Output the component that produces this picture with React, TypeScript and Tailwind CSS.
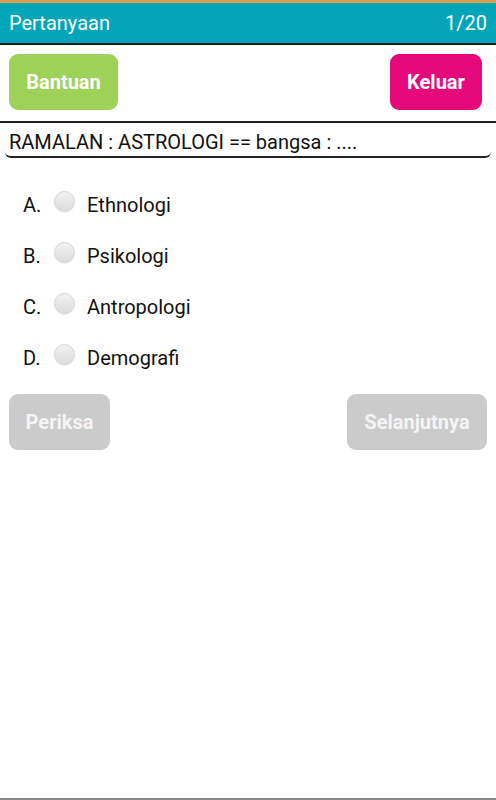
import React from 'react';

const options = [
  { key: 'A.', label: 'Ethnologi' },
  { key: 'B.', label: 'Psikologi' },
  { key: 'C.', label: 'Antropologi' },
  { key: 'D.', label: 'Demografi' },
];

const Radio: React.FC = () => (
  <span className="block h-[21px] w-[21px] rounded-full border border-[#d4d4d4] bg-gradient-to-b from-[#f2f2f2] to-[#dcdcdc] shadow-[0_1px_1px_rgba(0,0,0,0.08)]" />
);

const App: React.FC = () => {
  return (
    <div className="relative flex h-[800px] w-[496px] flex-col bg-white font-['Roboto',sans-serif] text-[#111]">
      <div className="h-[3px] bg-[#d9a24a]" />
      <header className="flex h-[42px] items-center justify-between border-b-2 border-[#1a1a1a] bg-[#02a6b8] px-[9px] text-[20px] text-white">
        <span>Pertanyaan</span>
        <span>1/20</span>
      </header>

      <div className="flex justify-between pl-[9px] pr-[14px] pt-[9px]">
        <button className="h-[56px] w-[109px] rounded-[9px] bg-[#9dd158] text-[20px] font-bold text-white">
          Bantuan
        </button>
        <button className="h-[56px] w-[92px] rounded-[9px] bg-[#e5097c] text-[20px] font-bold text-white">
          Keluar
        </button>
      </div>

      <div className="mt-[11px] border-t-2 border-[#222]">
        <div className="mx-[5px] rounded-b-[6px] border-b-2 border-[#222] px-[4px] pb-[2px] pt-[7px] text-[20px] leading-[24px]">
          RAMALAN : ASTROLOGI == bangsa : ....
        </div>
      </div>

      <div className="mt-[35px] flex flex-col gap-[27px] pl-[23px]">
        {options.map((o) => (
          <div key={o.key} className="flex h-[24px] items-center text-[20px]">
            <span className="w-[31px]">{o.key}</span>
            <span className="-mt-[8px]">
              <Radio />
            </span>
            <span className="ml-[12px]">{o.label}</span>
          </div>
        ))}
      </div>

      <div className="mt-[24px] flex justify-between pl-[9px] pr-[9px]">
        <button className="h-[56px] w-[101px] rounded-[9px] bg-[#cbcbcb] text-[20px] font-bold text-[#f4f4f4]">
          Periksa
        </button>
        <button className="h-[56px] w-[140px] rounded-[9px] bg-[#cbcbcb] text-[20px] font-bold text-[#f4f4f4]">
          Selanjutnya
        </button>
      </div>

      <div className="mt-auto h-[2px] bg-[#8a8a8a]" />
    </div>
  );
};

export default App;
